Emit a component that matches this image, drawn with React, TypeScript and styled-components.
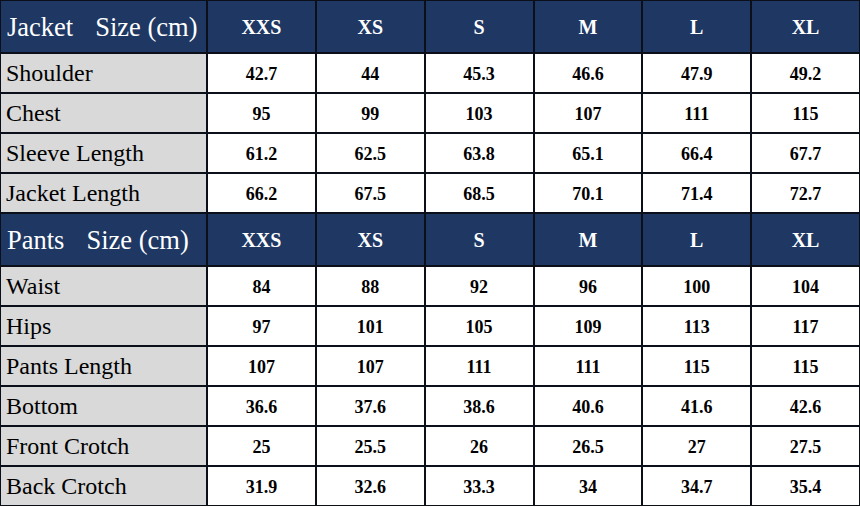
import React from 'react'
import styled, { createGlobalStyle } from 'styled-components'

const GlobalStyle = createGlobalStyle`
  html, body {
    margin: 0;
    padding: 0;
    background: #ffffff;
  }
`

interface Section {
  title: string
  rows: [string, string[]][]
}

const SIZES = ['XXS', 'XS', 'S', 'M', 'L', 'XL']

const SECTIONS: Section[] = [
  {
    title: 'Jacket',
    rows: [
      ['Shoulder', ['42.7', '44', '45.3', '46.6', '47.9', '49.2']],
      ['Chest', ['95', '99', '103', '107', '111', '115']],
      ['Sleeve Length', ['61.2', '62.5', '63.8', '65.1', '66.4', '67.7']],
      ['Jacket Length', ['66.2', '67.5', '68.5', '70.1', '71.4', '72.7']],
    ],
  },
  {
    title: 'Pants',
    rows: [
      ['Waist', ['84', '88', '92', '96', '100', '104']],
      ['Hips', ['97', '101', '105', '109', '113', '117']],
      ['Pants Length', ['107', '107', '111', '111', '115', '115']],
      ['Bottom', ['36.6', '37.6', '38.6', '40.6', '41.6', '42.6']],
      ['Front Crotch', ['25', '25.5', '26', '26.5', '27', '27.5']],
      ['Back Crotch', ['31.9', '32.6', '33.3', '34', '34.7', '35.4']],
    ],
  },
]

// two header bands of 51px, data rows of 38px, 2px black rules between
const Chart = styled.div`
  display: grid;
  grid-template-columns: 205px repeat(6, 1fr);
  grid-template-rows: 51px repeat(4, 38px) 51px repeat(6, 38px);
  gap: 2px;
  width: 860px;
  box-sizing: border-box;
  padding: 1px;
  background: #0a0f1a;
  font-family: 'Liberation Serif', 'Times New Roman', serif;
`

const HeadLabel = styled.div`
  display: flex;
  align-items: center;
  gap: 22px;
  padding: 2px 0 0 6px;
  background: #1e3763;
  color: #ffffff;
  font-size: 26.5px;
`

const HeadSize = styled.div`
  display: flex;
  align-items: center;
  justify-content: center;
  padding-top: 2px;
  background: #1e3763;
  color: #ffffff;
  font-size: 20px;
  font-weight: bold;
`

const RowLabel = styled.div`
  display: flex;
  align-items: center;
  padding-left: 5px;
  background: #d9d9d9;
  color: #000000;
  font-size: 24px;
`

const Value = styled.div`
  display: flex;
  align-items: center;
  justify-content: center;
  padding-top: 2px;
  background: #ffffff;
  color: #000000;
  font-size: 18px;
  font-weight: bold;
`

const App = () => (
  <>
    <GlobalStyle />
    <Chart>
      {SECTIONS.map((section) => (
        <React.Fragment key={section.title}>
          <HeadLabel>
            <span>{section.title}</span>
            <span>Size (cm)</span>
          </HeadLabel>
          {SIZES.map((size) => (
            <HeadSize key={size}>{size}</HeadSize>
          ))}
          {section.rows.map(([label, values]) => (
            <React.Fragment key={label}>
              <RowLabel>{label}</RowLabel>
              {values.map((v, i) => (
                <Value key={i}>{v}</Value>
              ))}
            </React.Fragment>
          ))}
        </React.Fragment>
      ))}
    </Chart>
  </>
)

export default App
